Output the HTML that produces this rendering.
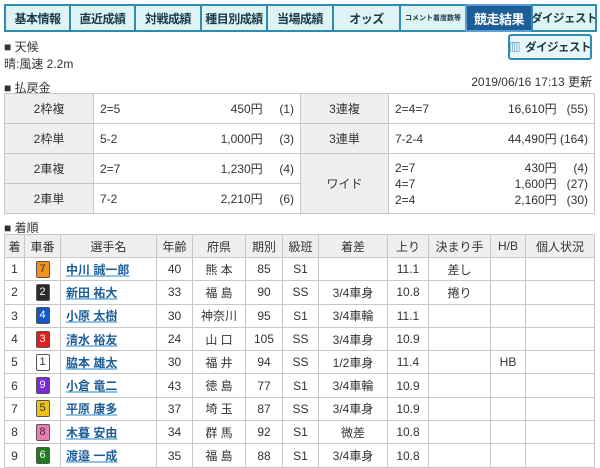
<!DOCTYPE html>
<html><head><meta charset="utf-8"><style>
*{box-sizing:border-box;margin:0;padding:0}
body{width:600px;height:467px;overflow:hidden;background:#fff;font-family:"Liberation Sans","Noto Sans CJK JP",sans-serif;font-size:12px;color:#333;position:relative}
.tab{position:absolute;top:4px;height:28px;background:#def4f4;border:2px solid #2f8bb0;display:flex;align-items:center;justify-content:center;font-weight:bold;font-size:12px;color:#1a3a4a;white-space:nowrap;overflow:hidden;letter-spacing:-0.5px}
.tab.on{background:#1d5e96;color:#fff;border-color:#5aa0d8}
.abs{position:absolute;white-space:nowrap}
.btn{position:absolute;left:508px;top:34px;width:84px;height:26px;border:2px solid #2f8bb0;border-radius:3px;background:#eaf7f8;font-weight:bold;font-size:11.5px;display:flex;align-items:center;justify-content:center;color:#1a3a4a;white-space:nowrap;letter-spacing:-0.5px}
table{position:absolute;border-collapse:collapse;table-layout:fixed}
td{border:1px solid #c8c8c8;padding:0 6px;white-space:nowrap}
.pay td{height:30px}
.pay .h{background:#f0efee;text-align:center}
.f{display:flex;justify-content:space-between;line-height:16px}
.res td{height:23.3px;text-align:center;padding:0}
.res tr:first-child td{background:#f0efee;height:23px}
.nm{text-align:left!important;padding-left:5px!important}
.nm a{color:#1f5e98;font-weight:bold;text-decoration:underline;text-decoration-color:#8ec3e6;text-decoration-thickness:2px}
.b{display:inline-block;width:14px;height:17px;line-height:15px;border:1px solid #555;border-radius:2px;font-size:11px;vertical-align:middle}
</style></head><body>
<div class="tab" style="left:4px;width:67px">基本情報</div>
<div class="tab" style="left:69px;width:67px">直近成績</div>
<div class="tab" style="left:134px;width:68px">対戦成績</div>
<div class="tab" style="left:200px;width:68px">種目別成績</div>
<div class="tab" style="left:266px;width:68px">当場成績</div>
<div class="tab" style="left:332px;width:69px">オッズ</div>
<div class="tab" style="left:399px;width:68px;font-size:7px;letter-spacing:0">コメント着度数等</div>
<div class="tab on" style="left:465px;width:68px;font-size:13px">競走結果</div>
<div class="tab" style="left:531px;width:66px;font-size:11.5px">ダイジェスト</div>
<div class="btn"><span style="color:#3a8ac0;margin-right:5px">▥</span>ダイジェスト</div>
<div class="abs" style="left:4px;top:38px">■ 天候</div>
<div class="abs" style="left:4px;top:55px">晴:風速 2.2m</div>
<div class="abs" style="left:4px;top:79px">■ 払戻金</div>
<div class="abs" style="right:8px;top:73px">2019/06/16 17:13 更新</div>
<table class="pay" style="left:4px;top:93px;width:590px">
<colgroup><col style="width:89px"><col style="width:207px"><col style="width:88px"><col style="width:206px"></colgroup>
<tr><td class="h">2枠複</td><td><div class="f"><span>2=5</span><span>450円&nbsp;&nbsp;&nbsp;&nbsp;&nbsp;(1)</span></div></td><td class="h">3連複</td><td><div class="f"><span>2=4=7</span><span>16,610円&nbsp;&nbsp;&nbsp;(55)</span></div></td></tr>
<tr><td class="h">2枠単</td><td><div class="f"><span>5-2</span><span>1,000円&nbsp;&nbsp;&nbsp;&nbsp;&nbsp;(3)</span></div></td><td class="h">3連単</td><td><div class="f"><span>7-2-4</span><span>44,490円 (164)</span></div></td></tr>
<tr><td class="h">2車複</td><td><div class="f"><span>2=7</span><span>1,230円&nbsp;&nbsp;&nbsp;&nbsp;&nbsp;(4)</span></div></td><td class="h" rowspan="2">ワイド</td><td rowspan="2"><div class="f"><span>2=7</span><span>430円&nbsp;&nbsp;&nbsp;&nbsp;&nbsp;(4)</span></div><div class="f"><span>4=7</span><span>1,600円&nbsp;&nbsp;&nbsp;(27)</span></div><div class="f"><span>2=4</span><span>2,160円&nbsp;&nbsp;&nbsp;(30)</span></div></td></tr>
<tr><td class="h">2車単</td><td><div class="f"><span>7-2</span><span>2,210円&nbsp;&nbsp;&nbsp;&nbsp;&nbsp;(6)</span></div></td></tr>
</table>
<div class="abs" style="left:4px;top:219px">■ 着順</div>
<table class="res" style="left:4px;top:234px;width:590px">
<colgroup><col style="width:20px"><col style="width:36px"><col style="width:96px"><col style="width:36px"><col style="width:53px"><col style="width:37px"><col style="width:36px"><col style="width:69px"><col style="width:41px"><col style="width:62px"><col style="width:35px"><col style="width:69px"></colgroup>
<tr><td>着</td><td>車番</td><td>選手名</td><td>年齢</td><td>府県</td><td>期別</td><td>級班</td><td>着差</td><td>上り</td><td>決まり手</td><td>H/B</td><td>個人状況</td></tr>
<tr><td>1</td><td><span class="b" style="background:#f39018;color:#333">7</span></td><td class="nm"><a>中川 誠一郎</a></td><td>40</td><td>熊 本</td><td>85</td><td>S1</td><td></td><td>11.1</td><td>差し</td><td></td><td></td></tr>
<tr><td>2</td><td><span class="b" style="background:#2b2b2b;color:#fff">2</span></td><td class="nm"><a>新田 祐大</a></td><td>33</td><td>福 島</td><td>90</td><td>SS</td><td>3/4車身</td><td>10.8</td><td>捲り</td><td></td><td></td></tr>
<tr><td>3</td><td><span class="b" style="background:#1556c8;color:#fff">4</span></td><td class="nm"><a>小原 太樹</a></td><td>30</td><td>神奈川</td><td>95</td><td>S1</td><td>3/4車輪</td><td>11.1</td><td></td><td></td><td></td></tr>
<tr><td>4</td><td><span class="b" style="background:#e21e1e;color:#fff">3</span></td><td class="nm"><a>清水 裕友</a></td><td>24</td><td>山 口</td><td>105</td><td>SS</td><td>3/4車身</td><td>10.9</td><td></td><td></td><td></td></tr>
<tr><td>5</td><td><span class="b" style="background:#fff">1</span></td><td class="nm"><a>脇本 雄太</a></td><td>30</td><td>福 井</td><td>94</td><td>SS</td><td>1/2車身</td><td>11.4</td><td></td><td>HB</td><td></td></tr>
<tr><td>6</td><td><span class="b" style="background:#7a2ad8;color:#fff">9</span></td><td class="nm"><a>小倉 竜二</a></td><td>43</td><td>徳 島</td><td>77</td><td>S1</td><td>3/4車輪</td><td>10.9</td><td></td><td></td><td></td></tr>
<tr><td>7</td><td><span class="b" style="background:#f0c21a">5</span></td><td class="nm"><a>平原 康多</a></td><td>37</td><td>埼 玉</td><td>87</td><td>SS</td><td>3/4車身</td><td>10.9</td><td></td><td></td><td></td></tr>
<tr><td>8</td><td><span class="b" style="background:#f07ab8">8</span></td><td class="nm"><a>木暮 安由</a></td><td>34</td><td>群 馬</td><td>92</td><td>S1</td><td>微差</td><td>10.8</td><td></td><td></td><td></td></tr>
<tr><td>9</td><td><span class="b" style="background:#1e7a1e;color:#fff">6</span></td><td class="nm"><a>渡邉 一成</a></td><td>35</td><td>福 島</td><td>88</td><td>S1</td><td>3/4車身</td><td>10.8</td><td></td><td></td><td></td></tr>
</table>
</body></html>
